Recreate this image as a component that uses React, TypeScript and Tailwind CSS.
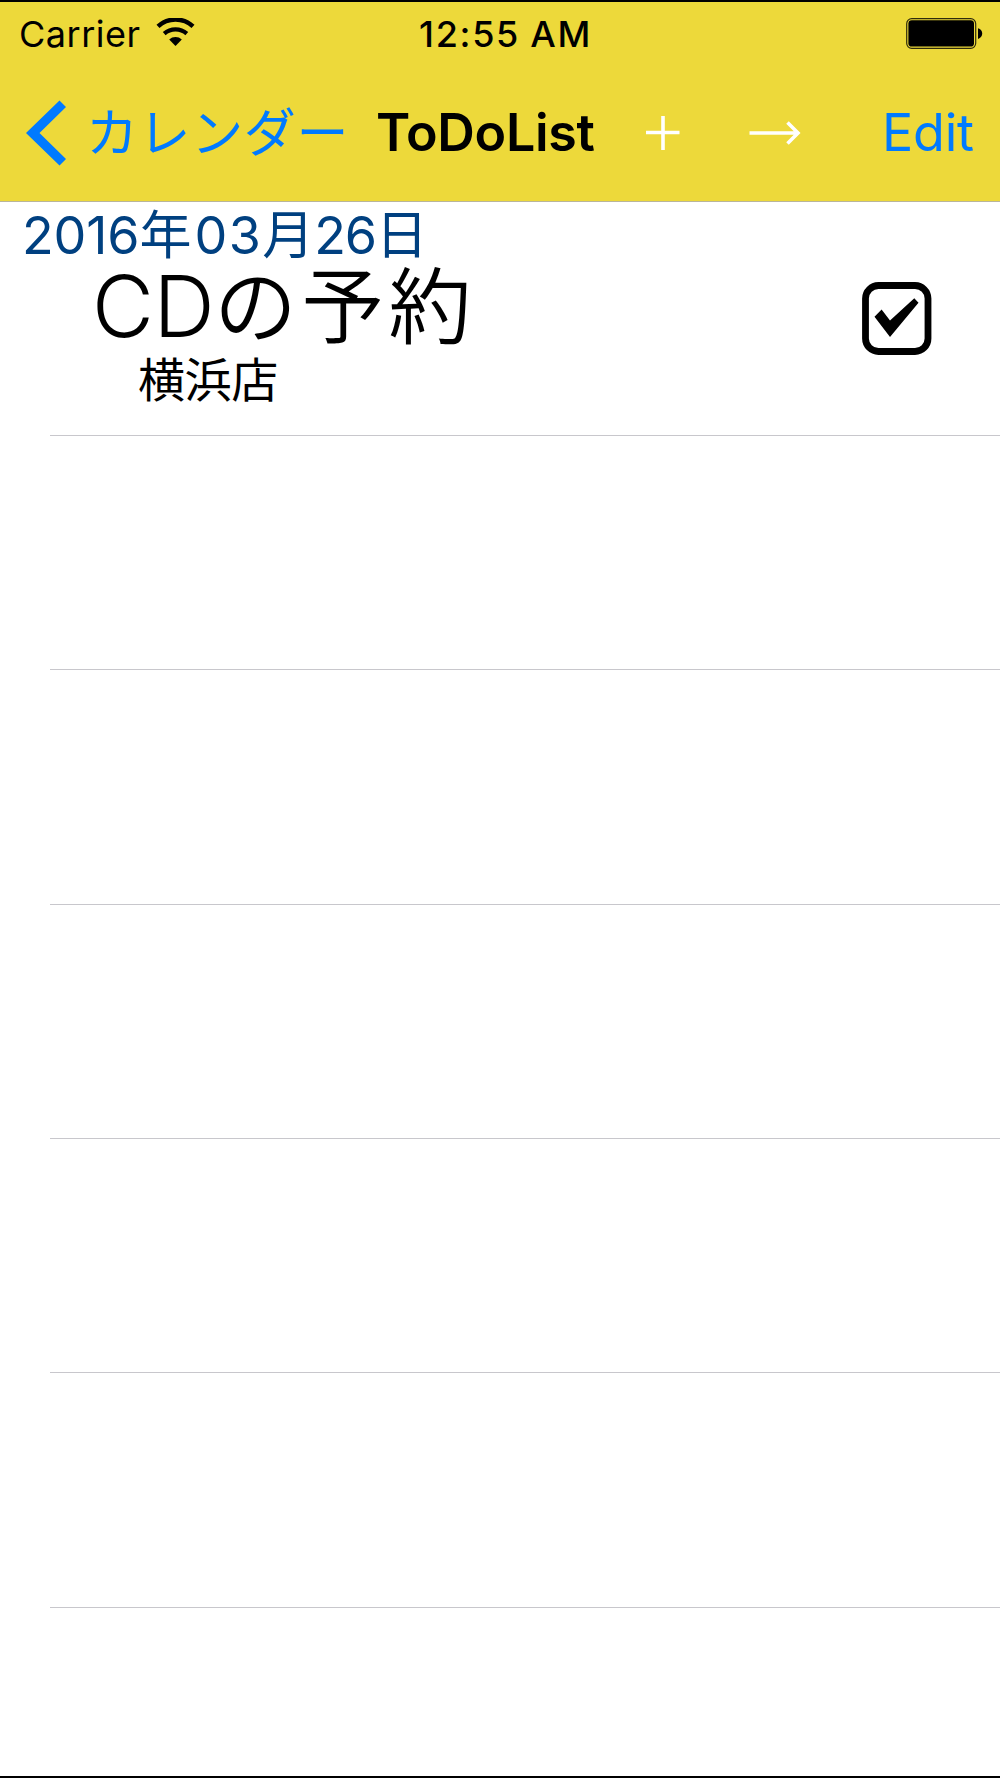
const FONT = "font-['Inter','Noto_Sans_CJK_JP',sans-serif]";

function StatusBar() {
  return (
    <div className="flex h-16 items-center text-[36px] leading-none text-black">
      <div className="flex w-[419px] items-center pl-[19px]">
        <span className="w-[121px] whitespace-nowrap tracking-[0.5px]">Carrier</span>
        <svg className="ml-4 -mt-1 h-7 w-[40px]" viewBox="0 0 40 28" fill="none">
          <path d="M2 8.4a25.6 25.6 0 0 1 35 0" stroke="#000" strokeWidth="4.4" />
          <path d="M8.2 15.6a17 17 0 0 1 22.6 0" stroke="#000" strokeWidth="4.2" />
          <path d="M13.2 21.4a9.3 9.3 0 0 1 12.6 0L19.5 28z" fill="#000" />
        </svg>
      </div>
      <span className="whitespace-nowrap font-medium tracking-[1.7px] [word-spacing:-1px]">12:55 AM</span>
      <div className="flex flex-1 justify-end pr-[17px]">
        <svg className="-mt-0.5 h-[31px] w-[77px]" viewBox="0 0 77 31">
          <rect x="0.7" y="0.7" width="69" height="29.6" rx="5" fill="none" stroke="#000" strokeOpacity="0.8" strokeWidth="1.2" />
          <rect x="2.4" y="2.2" width="65.6" height="26.4" rx="3.4" fill="#000" />
          <path d="M72 10.3c2.8.8 4.2 2.9 4.2 5.3s-1.4 4.5-4.2 5.3z" fill="#000" />
        </svg>
      </div>
    </div>
  );
}

function NavBar() {
  return (
    <div className="flex h-[135px] items-center pb-[2px] text-[52px] leading-none">
      <button className="flex w-[376px] items-center pl-[26px] text-[#007aff]">
        <svg className="h-[66px] w-10" viewBox="0 0 40 66">
          <path d="M33.5 0.5 40 7 13.5 33 40 59 33.5 65.5 0 33z" fill="currentColor" />
        </svg>
        <span className="ml-[20px] whitespace-nowrap pt-[2px] text-[52px] tracking-[0.6px]">カレンダー</span>
      </button>
      <h1 className="w-[269px] whitespace-nowrap pt-px font-semibold tracking-[-0.3px]">ToDoList</h1>
      <button aria-label="Add" className="w-[104px]">
        <svg className="h-[36px] w-[36px]" viewBox="0 0 36 36" stroke="#fff" strokeWidth="3.6">
          <path d="M1 17.5h33.5M18 1v34" />
        </svg>
      </button>
      <button aria-label="Next" className="w-[133px]">
        <svg className="h-6 w-[52px]" viewBox="0 0 52 24" fill="none" stroke="#fff" strokeWidth="3.6">
          <path d="M0.5 12H49M38.5 1.5 49 12 38.5 22.5" />
        </svg>
      </button>
      <button className="whitespace-nowrap pt-px tracking-[-0.2px] text-[#007aff]">Edit</button>
    </div>
  );
}

function Checkbox() {
  return (
    <svg className="h-[74px] w-[70px]" viewBox="0 0 70 74">
      <rect x="3.5" y="3.5" width="62.5" height="66" rx="13" fill="none" stroke="#000" strokeWidth="6.8" />
      <path d="M12.5 34.8 19.6 27.6 28 38.6 52.3 16.2 56.5 20.7 28 55z" fill="#000" />
    </svg>
  );
}

function TaskRow() {
  return (
    <div className="flex h-[233px] pt-[4px]">
      <div className="flex-1 whitespace-nowrap text-black">
        <p className="pl-[22px] text-[52px] leading-[60px] text-[#004080]">
          <span className="tracking-[-0.1px]">2016</span>
          <span className="tracking-[3px]">年</span>
          <span className="tracking-[1.4px]">03</span>
          <span>月</span>
          <span className="tracking-[-1.2px]">26</span>日
        </p>
        <p className="pl-[92px] text-[85px] font-light leading-[82px]">
          <span className="tracking-[-0.5px]">CD</span>
          <span className="text-[83px] font-[350] tracking-[4.2px]">の予約</span>
        </p>
        <p className="pl-[138px] text-[47px] leading-[64px] tracking-[-0.4px]">横浜店</p>
      </div>
      <div className="pr-[68px] pt-[76px]">
        <Checkbox />
      </div>
    </div>
  );
}

const emptyRows = [1, 2, 3, 4, 5];

export default function App() {
  return (
    <div className={`h-[1778px] w-[1000px] overflow-hidden border-t-2 border-b-2 border-black bg-white ${FONT}`}>
      <header className="border-b border-[#b9b59b] bg-[#edd93a]">
        <StatusBar />
        <NavBar />
      </header>
      <main>
        <TaskRow />
        <div className="ml-[50px] h-px bg-[#c8c7cc]" />
        {emptyRows.map((row) => (
          <div key={row} className="ml-[50px] h-[234.35px] border-b border-[#c8c7cc]" />
        ))}
      </main>
    </div>
  );
}
